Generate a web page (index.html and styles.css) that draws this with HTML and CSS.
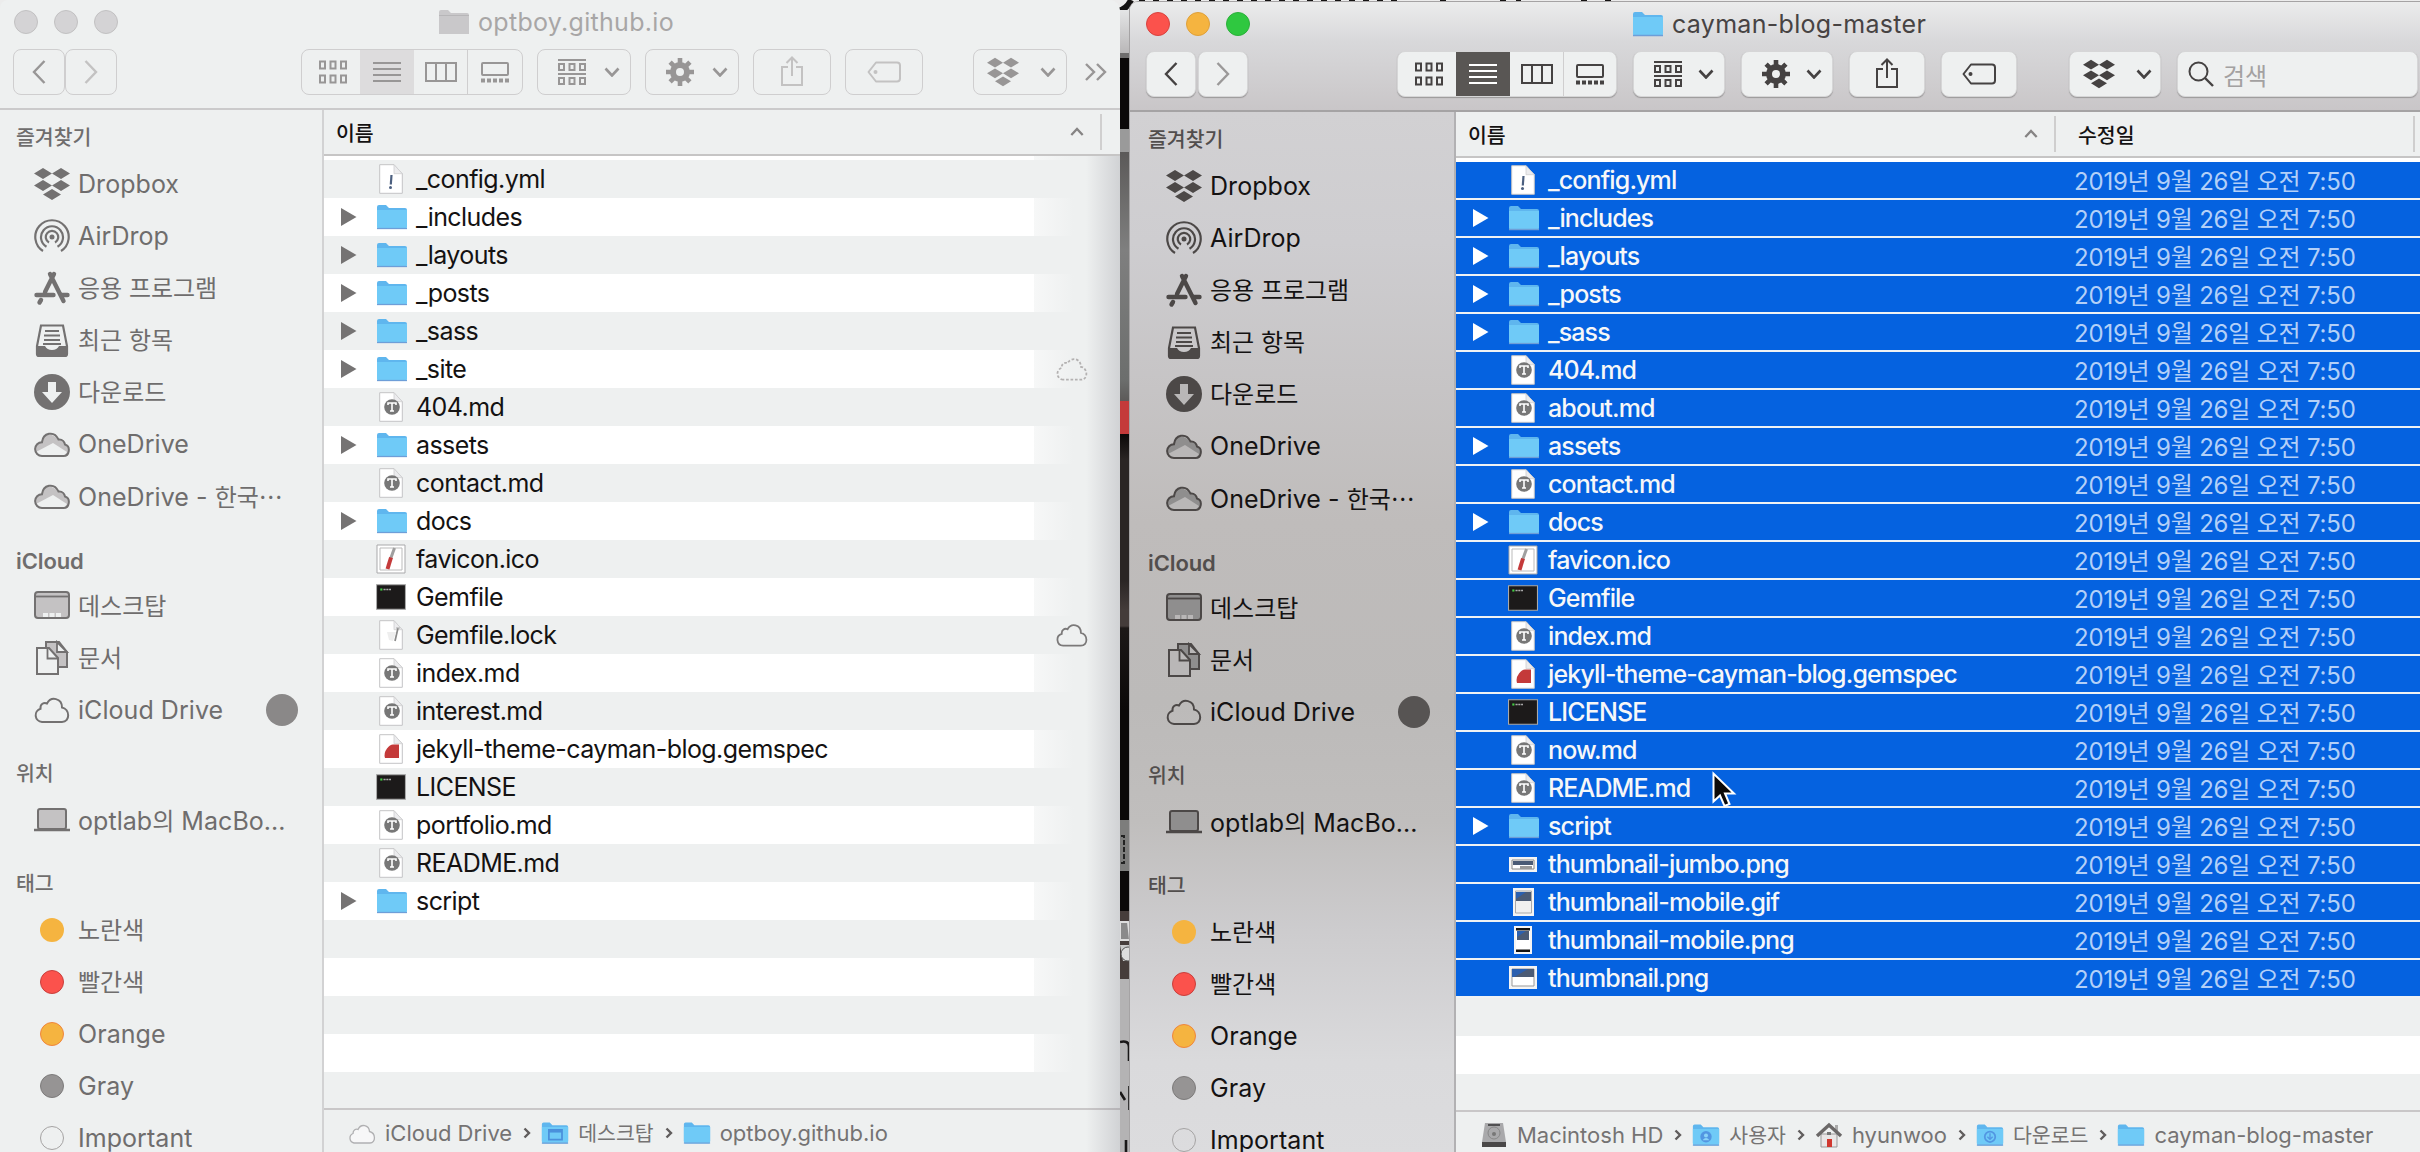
FILE: index.html
```html
<!DOCTYPE html>
<html lang="ko">
<head>
<meta charset="utf-8">
<title>Finder</title>
<link rel="stylesheet" href="styles.css">
</head>
<body>
<svg class="sprite" aria-hidden="true">
  <symbol id="dropbox" viewBox="0 0 36 36"><path fill="currentColor" d="M9 2l9 5.500-9 5.500-9-5.500zM27 2l9 5.500-9 5.500-9-5.500zM9 14l9 5.500-9 5.500-9-5.500zM27 14l9 5.500-9 5.500-9-5.500zM18 23l9 5.500-9 5.500-9-5.500z"/></symbol>
  <symbol id="airdrop" viewBox="0 0 36 36"><circle cx="18" cy="19" r="2.500" fill="currentColor"/><g fill="none" stroke="currentColor" stroke-width="2.200"><path d="M15 24.500a6.200 6.200 0 1 1 6 0M12.500 28.800a11 11 0 1 1 11 0M9 33a16.700 16.700 0 1 1 18 0"/></g></symbol>
  <symbol id="apps" viewBox="0 0 36 36"><g fill="none" stroke="currentColor" stroke-width="4.400" stroke-linecap="round"><path d="M16 4l13.500 27M20 4l-9 18M2.500 25h17M28 25h5.500M7 30l-1.500 2.500"/></g></symbol>
  <symbol id="recents" viewBox="0 0 36 36"><path d="M7 3.500h22l4 20.500v8q0 2-2 2H5q-2 0-2-2v-8z" fill="none" stroke="currentColor" stroke-width="2.200"/><path d="M3 24h8q2 4 7 4t7-4h8v10H3z" fill="currentColor"/><path d="M11 9h14M10 13.500h16M10 18h16M9 22h18" stroke="currentColor" stroke-width="1.800"/></symbol>
  <symbol id="downloads" viewBox="0 0 36 36"><circle cx="18" cy="18" r="18" fill="currentColor"/><path class="cut" d="M14 8h8v10h6L18 29 8 18h6z"/></symbol>
  <symbol id="onedrive" viewBox="0 0 36 36"><path class="mid" d="M8 30a6.600 6.600 0 0 1-1-13.300C8 10 17 4 24 14c5-.5 7 3 7 5.500 5 2 5 10.500-1 10.500z"/><path class="lite" d="M2 26l17-9 14 9-3 4H7z"/><path d="M8 30a6.900 6.900 0 0 1 0-13.800C9 7 20 4 24.500 13.500c4-.5 6 2.500 6.500 5 6 2 4.500 11.500-1.500 11.500z" fill="none" stroke="currentColor" stroke-width="2"/></symbol>
  <symbol id="desktop" viewBox="0 0 36 36"><rect class="mid" x="1" y="4" width="34" height="26" rx="3" stroke="currentColor" stroke-width="2"/><path d="M2 8.500h32" stroke="currentColor" stroke-width="1.800"/><path class="lite" d="M9 25h5v4H9zM15.500 25h5v4h-5zM22 25h5v4h-5z"/></symbol>
  <symbol id="documents" viewBox="0 0 36 36"><path class="mid" d="M12 2h13l8 10v15H12z" stroke="currentColor" stroke-width="2"/><path class="lite" d="M23 2v10h10z" stroke="currentColor" stroke-width="1.800"/><path class="lite" d="M3 8h12l9 10v16H3z" stroke="currentColor" stroke-width="2"/><path d="M13.500 8v10.500H23" fill="none" stroke="currentColor" stroke-width="1.800"/></symbol>
  <symbol id="cloud" viewBox="0 0 36 36"><path d="M8 30a6.800 6.800 0 0 1-1.500-13.300C6 12 10 10 13 11.500 17 4 28 6 28 15.500c8 1.500 8.500 14.500 0 14.500z" fill="none" stroke="currentColor" stroke-width="2"/></symbol>
  <symbol id="laptop" viewBox="0 0 36 36"><rect class="mid" x="4" y="7" width="28" height="20" rx="2" stroke="currentColor" stroke-width="2"/><path d="M0 28h36" stroke="currentColor" stroke-width="2.400"/></symbol>
  <symbol id="folder" viewBox="0 0 32 26"><path fill="#5fb6ee" d="M1 3q0-2 2-2h7l3 3h16q2 0 2 2v16H1z"/><path fill="#6fcaf7" d="M1 6h30v17q0 2-1.500 2h-27Q1 25 1 23z"/><path d="M1 24.500h30" stroke="#6e9ed8" stroke-width="1.300"/></symbol>
  <symbol id="folder-gray" viewBox="0 0 32 26"><path fill="#c9c8ca" d="M1 3q0-2 2-2h7l3 3h16q2 0 2 2v19H1z"/><path d="M1 6.500h30" stroke="#b7b6b8"/></symbol>
  <symbol id="folder-desk" viewBox="0 0 32 26"><use href="#folder"/><path d="M9 9.500h15v11H9z" fill="none" stroke="#4a90dc" stroke-width="2"/><path d="M9 11h15" stroke="#4a90dc" stroke-width="3"/></symbol>
  <symbol id="folder-user" viewBox="0 0 32 26"><use href="#folder"/><circle cx="16" cy="15" r="6.500" fill="#5296e2"/><circle cx="16" cy="13.500" r="2.300" fill="#8ad3f8"/><path d="M12 19q4-5 8 0" fill="#8ad3f8"/></symbol>
  <symbol id="folder-down" viewBox="0 0 32 26"><use href="#folder"/><circle cx="16" cy="15" r="6" fill="none" stroke="#5296e2" stroke-width="2"/><path d="M16 11v7m-3-3l3 3 3-3" fill="none" stroke="#5296e2" stroke-width="1.500"/></symbol>
  <symbol id="page" viewBox="0 0 24 30"><path d="M.7.7H15l8.300 9V29.300H.7z" fill="#fff" stroke="#c4c4c6" stroke-width="1"/><path d="M15 .7v9h8.300z" fill="#ececee" stroke="#cfcfd1" stroke-width=".8"/></symbol>
  <symbol id="yml" viewBox="0 0 24 30"><use href="#page"/><path d="M12.500 11l-.7 9.500" stroke="#4c6080" stroke-width="2.200"/><circle cx="11.500" cy="23.500" r="1.500" fill="#4c6080"/></symbol>
  <symbol id="md" viewBox="0 0 24 30"><use href="#page"/><circle cx="13" cy="15" r="7.800" fill="#777"/><path d="M9 13v-2h8v2M13 11v8M11 19h4" fill="none" stroke="#fff" stroke-width="1.600"/></symbol>
  <symbol id="lock" viewBox="0 0 24 30"><use href="#page"/><path d="M19 8l-3 13" stroke="#8a8a8a" stroke-width="1.700"/><path d="M17 8h4" stroke="#aaa"/><path d="M8 12l2 8 4 1 3-9" fill="#eee"/></symbol>
  <symbol id="gem" viewBox="0 0 24 30"><use href="#page"/><path fill="#c43a3a" d="M14 10.500h6v13.500H6q-1.500-5 2-9.500 3-4 6-4z"/></symbol>
  <symbol id="ico" viewBox="0 0 30 30"><path d="M1 1h28v28H1z" fill="#fff" stroke="#a9a9ab"/><path d="M4 4h22v22H4z" fill="#fff" stroke="#bbb"/><path d="M18.500 4l-4 11" stroke="#a0a0a0" stroke-width="3"/><path d="M15 13.500L11.500 25" stroke="#c43a3a" stroke-width="4"/></symbol>
  <symbol id="exec" viewBox="0 0 28 28"><path d="M.5 2.500h27v23H.5z" fill="#1c1a1a" stroke="#aaa"/><path d="M4 7h2" stroke="#4c4" stroke-width="2"/><path d="M7 7h7" stroke="#aaa" stroke-width="1.600" stroke-dasharray="2 .6"/></symbol>
  <symbol id="jumbo" viewBox="0 0 30 30"><path d="M1 8h28v15H1z" fill="#f4f4f4"/><path d="M4 11h22v9H4z" fill="#fff" stroke="#888"/><path d="M5 12h20v4H5z" fill="#4b5b75"/><path d="M12 17h12v3H12z" fill="#999"/></symbol>
  <symbol id="mobile-gif" viewBox="0 0 30 30"><path d="M5 1h21v28H5z" fill="#f4f4f4"/><path d="M7.500 4h16v22h-16z" fill="#f0f0f0" stroke="#aaa"/><path d="M8 5h15v9H8z" fill="#4b5b75"/><path d="M8 5h10l-10 7z" fill="#2b60b0"/></symbol>
  <symbol id="mobile-png" viewBox="0 0 30 30"><path d="M6 1h18v28H6z" fill="#f4f4f4"/><path d="M8 3h14v24H8z" fill="#fff"/><path d="M8 3h14v2.500H8zM8 24.500h14V27H8z" fill="#111"/><path d="M9 6h12v9H9z" fill="#4b5b75"/><path d="M9 6h9l-9 6z" fill="#2b60b0"/></symbol>
  <symbol id="thumb" viewBox="0 0 30 30"><path d="M1 3h28v23H1z" fill="#f4f4f4"/><path d="M4 6h22v17H4z" fill="#fff" stroke="#999"/><path d="M4 6h22v8H4z" fill="#4b5b75"/><path d="M4 6h16L6 14H4z" fill="#2b60b0"/></symbol>
  <symbol id="disk" viewBox="0 0 26 26"><path d="M4 1h18l3 19v5H1v-5z" fill="#a9a9ab"/><path d="M1 20h24v5H1z" fill="#4a4848"/><circle cx="13" cy="11" r="6" fill="none" stroke="#888"/><circle cx="13" cy="12" r="2" fill="#777"/><path d="M7 3h12" stroke="#333" stroke-width="1.500"/></symbol>
  <symbol id="house" viewBox="0 0 26 26"><path d="M5 12h16v13H5z" fill="#e9e6e6" stroke="#999"/><path d="M19 3h3v7h-3z" fill="#aaa"/><path d="M1 14L13 3l12 11" fill="none" stroke="#6b6868" stroke-width="3.400"/><path d="M11 17h5v8h-5z" fill="#d0382f"/><path d="M11 10h4v3h-4z" fill="#777"/></symbol>
  <symbol id="softcloud" viewBox="0 0 26 26"><path d="M5 23a5 5 0 0 1-1-9.500C4 10 7 8.500 9 9.500 12 3 20 5 20.500 11.500 27 13 27 23 21 23z" fill="#f7f7f8" stroke="#b0b0b2" stroke-width="1.300"/></symbol>
  <symbol id="v-icons" viewBox="0 0 28 24"><path d="M1 1.500h5v7H1zM11.500 1.500h5v7h-5zM22 1.500h5v7h-5zM1 15.500h5v7H1zM11.500 15.500h5v7h-5zM22 15.500h5v7h-5z" fill="none" stroke="currentColor" stroke-width="2"/></symbol>
  <symbol id="v-list" viewBox="0 0 28 24"><path d="M0 3h28M0 9h28M0 15h28M0 21h28" stroke="currentColor" stroke-width="2"/></symbol>
  <symbol id="v-cols" viewBox="0 0 32 24"><path d="M1 3h30v18H1zM11 3v18M21 3v18" fill="none" stroke="currentColor" stroke-width="2"/></symbol>
  <symbol id="v-gallery" viewBox="0 0 28 24"><rect x="1" y="3" width="26" height="12" rx="1" fill="none" stroke="currentColor" stroke-width="2"/><path d="M0 20.500h28" stroke="currentColor" stroke-width="4" stroke-dasharray="4 2"/></symbol>
  <symbol id="group" viewBox="0 0 28 28"><path d="M0 2h28M0 16h28" stroke="currentColor" stroke-width="2"/><path d="M1 6h5v6H1zM11.500 6h5v6h-5zM22 6h5v6h-5zM1 20h5v6H1zM11.500 20h5v6h-5zM22 20h5v6h-5z" fill="none" stroke="currentColor" stroke-width="2"/></symbol>
  <symbol id="gear" viewBox="0 0 28 28"><circle cx="14" cy="14" r="7" fill="none" stroke="currentColor" stroke-width="6"/><path d="M14 0v6M14 22v6M0 14h6M22 14h6M4.100 4.100l4.300 4.300M19.600 19.600l4.300 4.300M4.100 23.900l4.300-4.300M19.600 8.400l4.300-4.300" stroke="currentColor" stroke-width="4.600"/></symbol>
  <symbol id="share" viewBox="0 0 24 32"><path d="M8 12H2v18h20V12h-6M12 21V3M6.500 8L12 2.500 17.500 8" fill="none" stroke="currentColor" stroke-width="2"/></symbol>
  <symbol id="tag" viewBox="0 0 34 22"><path d="M9 1.500h21q3 0 3 3v13q0 3-3 3H9L1.500 11z" fill="none" stroke="currentColor" stroke-width="2" stroke-linejoin="round"/><circle cx="8.500" cy="11" r="2" fill="currentColor"/></symbol>
  <symbol id="down" viewBox="0 0 16 10"><path d="M1.500 1.500L8 8.500l6.500-7" fill="none" stroke="currentColor" stroke-width="2.600"/></symbol>
  <symbol id="back" viewBox="0 0 14 24"><path d="M12.500 1L2 12l10.500 11" fill="none" stroke="currentColor" stroke-width="2.400"/></symbol>
  <symbol id="fwd" viewBox="0 0 14 24"><path d="M1.500 1L12 12 1.500 23" fill="none" stroke="currentColor" stroke-width="2.400"/></symbol>
  <symbol id="more" viewBox="0 0 22 18"><path d="M1 1l8 8-8 8M12 1l8 8-8 8" fill="none" stroke="currentColor" stroke-width="2.400"/></symbol>
  <symbol id="loupe" viewBox="0 0 26 26"><circle cx="10.500" cy="10.500" r="9" fill="none" stroke="currentColor" stroke-width="2"/><path d="M17 17l8 8" stroke="currentColor" stroke-width="2.400"/></symbol>
  <symbol id="chev" viewBox="0 0 8 12"><path d="M1.500 1.500L6 6l-4.500 4.500" fill="none" stroke="currentColor" stroke-width="2.400"/></symbol>
  <symbol id="tri" viewBox="0 0 16 18"><path d="M0 0l15.500 9L0 18z" fill="currentColor"/></symbol>
</svg>

<div class="desktop">
  <div class="backdrop">
    <svg class="headline" viewBox="0 0 500 12">
      <path d="M3 11Q12 9 16 0" fill="none" stroke="#141212" stroke-width="6"/>
      <path d="M24 1h260" stroke="#141212" stroke-width="2.500" stroke-dasharray="6 8"/>
      <path d="M325 1h6M385 1h6M401 1h5M466 1h6M490 1h6" stroke="#141212" stroke-width="2.500"/>
    </svg>
    <svg class="sliver" viewBox="0 0 12 1142">
      <path d="M1 826h3v27H1" fill="none" stroke="#222" stroke-width="2" stroke-dasharray="5 2"/>
      <path d="M0 912h8l2 18H0z" fill="#8a8a8a" stroke="#ddd" stroke-width="2"/>
      <path d="M0 935h12v16H3z" fill="#c9c9c9"/><circle cx="8" cy="944" r="7" fill="#ddd" stroke="#555"/>
      <path d="M0 1032q9-2 9 5v14M0 1082l5 8M9.500 1076v24M6 1130v12" fill="none" stroke="#1a1818" stroke-width="2.600"/>
    </svg>
  </div>

  <section class="window inactive">
    <header class="toolbar">
      <div class="titlebar">
        <i class="light"></i><i class="light"></i><i class="light"></i>
        <h1 class="title"><svg><use href="#folder-gray"/></svg>optboy.github.io</h1>
      </div>
      <div class="tools">
        <span class="btn nav"><svg class="i-nav"><use href="#back"/></svg></span><span class="btn nav off"><svg class="i-nav"><use href="#fwd"/></svg></span>
        <div class="btn seg"><span><svg class="i28"><use href="#v-icons"/></svg></span><span class="on"><svg class="i28"><use href="#v-list"/></svg></span><span><svg class="i32"><use href="#v-cols"/></svg></span><span><svg class="i28"><use href="#v-gallery"/></svg></span></div>
        <span class="btn drop"><svg class="i-group"><use href="#group"/></svg><svg class="i-down"><use href="#down"/></svg></span>
        <span class="btn drop"><svg class="i-group"><use href="#gear"/></svg><svg class="i-down"><use href="#down"/></svg></span>
        <span class="btn single off"><svg class="i-share"><use href="#share"/></svg></span>
        <span class="btn single off"><svg class="i-tag"><use href="#tag"/></svg></span>
        <span class="btn drop box"><svg class="i-box"><use href="#dropbox"/></svg><svg class="i-down"><use href="#down"/></svg></span>
        <svg class="i-more"><use href="#more"/></svg>
      </div>
    </header>
    <div class="body">
      <nav class="sidebar">
        <h2 class="ko">즐겨찾기</h2>
        <a><svg><use href="#dropbox"/></svg>Dropbox</a>
        <a><svg><use href="#airdrop"/></svg>AirDrop</a>
        <a><svg><use href="#apps"/></svg><span class="ko">응용 프로그램</span></a>
        <a><svg><use href="#recents"/></svg><span class="ko">최근 항목</span></a>
        <a><svg><use href="#downloads"/></svg><span class="ko">다운로드</span></a>
        <a><svg><use href="#onedrive"/></svg>OneDrive</a>
        <a><svg><use href="#onedrive"/></svg><span>OneDrive - <span class="ko">한국⋯</span></span></a>
        <h2>iCloud</h2>
        <a><svg><use href="#desktop"/></svg><span class="ko">데스크탑</span></a>
        <a><svg><use href="#documents"/></svg><span class="ko">문서</span></a>
        <a><svg><use href="#cloud"/></svg>iCloud Drive<i class="progress"></i></a>
        <h2 class="ko">위치</h2>
        <a><svg><use href="#laptop"/></svg><span>optlab<span class="ko">의</span> MacBo...</span></a>
        <h2 class="ko">태그</h2>
        <a><i class="dot yellow"></i><span class="ko">노란색</span></a>
        <a><i class="dot red"></i><span class="ko">빨간색</span></a>
        <a><i class="dot orange"></i>Orange</a>
        <a><i class="dot gray"></i>Gray</a>
        <a><i class="dot none"></i>Important</a>
      </nav>
      <main class="content">
        <div class="head"><span class="col-name ko">이름</span><svg class="sort"><use href="#down"/></svg></div>
        <div class="list">
          <div class="row"><b></b><svg class="doc"><use href="#yml"/></svg><span>_config.yml</span></div>
          <div class="row"><svg class="tri"><use href="#tri"/></svg><svg class="fold"><use href="#folder"/></svg><span>_includes</span></div>
          <div class="row"><svg class="tri"><use href="#tri"/></svg><svg class="fold"><use href="#folder"/></svg><span>_layouts</span></div>
          <div class="row"><svg class="tri"><use href="#tri"/></svg><svg class="fold"><use href="#folder"/></svg><span>_posts</span></div>
          <div class="row"><svg class="tri"><use href="#tri"/></svg><svg class="fold"><use href="#folder"/></svg><span>_sass</span></div>
          <div class="row"><svg class="tri"><use href="#tri"/></svg><svg class="fold"><use href="#folder"/></svg><span>_site</span><svg class="status dashed"><use href="#cloud"/></svg></div>
          <div class="row"><b></b><svg class="doc"><use href="#md"/></svg><span>404.md</span></div>
          <div class="row"><svg class="tri"><use href="#tri"/></svg><svg class="fold"><use href="#folder"/></svg><span>assets</span></div>
          <div class="row"><b></b><svg class="doc"><use href="#md"/></svg><span>contact.md</span></div>
          <div class="row"><svg class="tri"><use href="#tri"/></svg><svg class="fold"><use href="#folder"/></svg><span>docs</span></div>
          <div class="row"><b></b><svg class="doc"><use href="#ico"/></svg><span>favicon.ico</span></div>
          <div class="row"><b></b><svg class="doc"><use href="#exec"/></svg><span>Gemfile</span></div>
          <div class="row"><b></b><svg class="doc"><use href="#lock"/></svg><span>Gemfile.lock</span><svg class="status"><use href="#cloud"/></svg></div>
          <div class="row"><b></b><svg class="doc"><use href="#md"/></svg><span>index.md</span></div>
          <div class="row"><b></b><svg class="doc"><use href="#md"/></svg><span>interest.md</span></div>
          <div class="row"><b></b><svg class="doc"><use href="#gem"/></svg><span>jekyll-theme-cayman-blog.gemspec</span></div>
          <div class="row"><b></b><svg class="doc"><use href="#exec"/></svg><span>LICENSE</span></div>
          <div class="row"><b></b><svg class="doc"><use href="#md"/></svg><span>portfolio.md</span></div>
          <div class="row"><b></b><svg class="doc"><use href="#md"/></svg><span>README.md</span></div>
          <div class="row"><svg class="tri"><use href="#tri"/></svg><svg class="fold"><use href="#folder"/></svg><span>script</span></div>
        </div>
        <footer class="path">
          <svg><use href="#softcloud"/></svg><span>iCloud Drive</span><svg class="chev"><use href="#chev"/></svg>
          <svg><use href="#folder-desk"/></svg><span class="ko">데스크탑</span><svg class="chev"><use href="#chev"/></svg>
          <svg><use href="#folder"/></svg><span>optboy.github.io</span>
        </footer>
      </main>
    </div>
    <div class="edge-shade"></div>
  </section>

  <section class="window active">
    <header class="toolbar">
      <div class="titlebar">
        <i class="light close"></i><i class="light mini"></i><i class="light zoom"></i>
        <h1 class="title"><svg><use href="#folder"/></svg>cayman-blog-master</h1>
      </div>
      <div class="tools">
        <span class="btn nav"><svg class="i-nav"><use href="#back"/></svg></span><span class="btn nav off"><svg class="i-nav"><use href="#fwd"/></svg></span>
        <div class="btn seg"><span><svg class="i28"><use href="#v-icons"/></svg></span><span class="on"><svg class="i28"><use href="#v-list"/></svg></span><span><svg class="i32"><use href="#v-cols"/></svg></span><span><svg class="i28"><use href="#v-gallery"/></svg></span></div>
        <span class="btn drop"><svg class="i-group"><use href="#group"/></svg><svg class="i-down"><use href="#down"/></svg></span>
        <span class="btn drop"><svg class="i-group"><use href="#gear"/></svg><svg class="i-down"><use href="#down"/></svg></span>
        <span class="btn single"><svg class="i-share"><use href="#share"/></svg></span>
        <span class="btn single"><svg class="i-tag"><use href="#tag"/></svg></span>
        <span class="btn drop box"><svg class="i-box"><use href="#dropbox"/></svg><svg class="i-down"><use href="#down"/></svg></span>
        <span class="btn search"><svg class="i-loupe"><use href="#loupe"/></svg><span class="ko">검색</span></span>
      </div>
    </header>
    <div class="body">
      <nav class="sidebar">
        <h2 class="ko">즐겨찾기</h2>
        <a><svg><use href="#dropbox"/></svg>Dropbox</a>
        <a><svg><use href="#airdrop"/></svg>AirDrop</a>
        <a><svg><use href="#apps"/></svg><span class="ko">응용 프로그램</span></a>
        <a><svg><use href="#recents"/></svg><span class="ko">최근 항목</span></a>
        <a><svg><use href="#downloads"/></svg><span class="ko">다운로드</span></a>
        <a><svg><use href="#onedrive"/></svg>OneDrive</a>
        <a><svg><use href="#onedrive"/></svg><span>OneDrive - <span class="ko">한국⋯</span></span></a>
        <h2>iCloud</h2>
        <a><svg><use href="#desktop"/></svg><span class="ko">데스크탑</span></a>
        <a><svg><use href="#documents"/></svg><span class="ko">문서</span></a>
        <a><svg><use href="#cloud"/></svg>iCloud Drive<i class="progress"></i></a>
        <h2 class="ko">위치</h2>
        <a><svg><use href="#laptop"/></svg><span>optlab<span class="ko">의</span> MacBo...</span></a>
        <h2 class="ko">태그</h2>
        <a><i class="dot yellow"></i><span class="ko">노란색</span></a>
        <a><i class="dot red"></i><span class="ko">빨간색</span></a>
        <a><i class="dot orange"></i>Orange</a>
        <a><i class="dot gray"></i>Gray</a>
        <a><i class="dot none"></i>Important</a>
      </nav>
      <main class="content">
        <div class="head"><span class="col-name ko">이름</span><svg class="sort"><use href="#down"/></svg><span class="col-date ko">수정일</span></div>
        <div class="list">
          <div class="row"><b></b><svg class="doc"><use href="#yml"/></svg><span>_config.yml</span><time>2019년 9월 26일 오전 7:50</time></div>
          <div class="row"><svg class="tri"><use href="#tri"/></svg><svg class="fold"><use href="#folder"/></svg><span>_includes</span><time>2019년 9월 26일 오전 7:50</time></div>
          <div class="row"><svg class="tri"><use href="#tri"/></svg><svg class="fold"><use href="#folder"/></svg><span>_layouts</span><time>2019년 9월 26일 오전 7:50</time></div>
          <div class="row"><svg class="tri"><use href="#tri"/></svg><svg class="fold"><use href="#folder"/></svg><span>_posts</span><time>2019년 9월 26일 오전 7:50</time></div>
          <div class="row"><svg class="tri"><use href="#tri"/></svg><svg class="fold"><use href="#folder"/></svg><span>_sass</span><time>2019년 9월 26일 오전 7:50</time></div>
          <div class="row"><b></b><svg class="doc"><use href="#md"/></svg><span>404.md</span><time>2019년 9월 26일 오전 7:50</time></div>
          <div class="row"><b></b><svg class="doc"><use href="#md"/></svg><span>about.md</span><time>2019년 9월 26일 오전 7:50</time></div>
          <div class="row"><svg class="tri"><use href="#tri"/></svg><svg class="fold"><use href="#folder"/></svg><span>assets</span><time>2019년 9월 26일 오전 7:50</time></div>
          <div class="row"><b></b><svg class="doc"><use href="#md"/></svg><span>contact.md</span><time>2019년 9월 26일 오전 7:50</time></div>
          <div class="row"><svg class="tri"><use href="#tri"/></svg><svg class="fold"><use href="#folder"/></svg><span>docs</span><time>2019년 9월 26일 오전 7:50</time></div>
          <div class="row"><b></b><svg class="doc"><use href="#ico"/></svg><span>favicon.ico</span><time>2019년 9월 26일 오전 7:50</time></div>
          <div class="row"><b></b><svg class="doc"><use href="#exec"/></svg><span>Gemfile</span><time>2019년 9월 26일 오전 7:50</time></div>
          <div class="row"><b></b><svg class="doc"><use href="#md"/></svg><span>index.md</span><time>2019년 9월 26일 오전 7:50</time></div>
          <div class="row"><b></b><svg class="doc"><use href="#gem"/></svg><span>jekyll-theme-cayman-blog.gemspec</span><time>2019년 9월 26일 오전 7:50</time></div>
          <div class="row"><b></b><svg class="doc"><use href="#exec"/></svg><span>LICENSE</span><time>2019년 9월 26일 오전 7:50</time></div>
          <div class="row"><b></b><svg class="doc"><use href="#md"/></svg><span>now.md</span><time>2019년 9월 26일 오전 7:50</time></div>
          <div class="row"><b></b><svg class="doc"><use href="#md"/></svg><span>README.md</span><time>2019년 9월 26일 오전 7:50</time></div>
          <div class="row"><svg class="tri"><use href="#tri"/></svg><svg class="fold"><use href="#folder"/></svg><span>script</span><time>2019년 9월 26일 오전 7:50</time></div>
          <div class="row"><b></b><svg class="doc"><use href="#jumbo"/></svg><span>thumbnail-jumbo.png</span><time>2019년 9월 26일 오전 7:50</time></div>
          <div class="row"><b></b><svg class="doc"><use href="#mobile-gif"/></svg><span>thumbnail-mobile.gif</span><time>2019년 9월 26일 오전 7:50</time></div>
          <div class="row"><b></b><svg class="doc"><use href="#mobile-png"/></svg><span>thumbnail-mobile.png</span><time>2019년 9월 26일 오전 7:50</time></div>
          <div class="row"><b></b><svg class="doc"><use href="#thumb"/></svg><span>thumbnail.png</span><time>2019년 9월 26일 오전 7:50</time></div>
        </div>
        <footer class="path">
          <svg><use href="#disk"/></svg><span>Macintosh HD</span><svg class="chev"><use href="#chev"/></svg>
          <svg><use href="#folder-user"/></svg><span class="ko">사용자</span><svg class="chev"><use href="#chev"/></svg>
          <svg><use href="#house"/></svg><span>hyunwoo</span><svg class="chev"><use href="#chev"/></svg>
          <svg><use href="#folder-down"/></svg><span class="ko">다운로드</span><svg class="chev"><use href="#chev"/></svg>
          <svg><use href="#folder"/></svg><span>cayman-blog-master</span>
        </footer>
      </main>
    </div>
  </section>

  <svg class="cursor" viewBox="0 0 24 36"><path d="M1.500 1.500v28l6.500-6 4.500 10.500 5-2-4.500-10.500h9z" fill="#0c0a0a" stroke="#fff" stroke-width="2"/></svg>
</div>
</body>
</html>
```
FILE: styles.css
```css
* { box-sizing: border-box; }
body {
  margin: 0;
  font-family: Inter, "Noto Sans CJK KR", sans-serif;
  font-size: 25px;
}
svg { display: block; flex: none; overflow: visible; }
.sprite { position: absolute; width: 0; height: 0; }
.ko { font-family: "Noto Sans CJK KR", sans-serif; letter-spacing: 0; }

.desktop { position: relative; width: 2420px; height: 1152px; overflow: hidden; background: #ececec; }
.backdrop { position: absolute; inset: 0; }
.sliver {
  position: absolute; left: 1120px; top: 10px; width: 12px; height: 1142px; overflow: hidden;
  background: linear-gradient(#e4e5e6 0, #b9b7b8 43px, #6f6d6d 43px 48px, #0b0808 48px 119px, #9a9a9a 119px 142px, #5b5958 142px, #7f7f7f 240px, #6c6e6d 370px, #5c5a59 391px, #c43a3a 391px 424px, #0b0808 424px, #2a2524 450px, #2a2524 570px, #443c3a 600px, #443c3a 616px, #1c1817 618px, #0b0808 700px 810px, #7d7d7c 810px 861px, #0b0808 861px 901px, #463d3b 901px 969px, #b4b3b4 969px);
}
.headline { position: absolute; left: 1115px; top: 0; width: 500px; height: 12px; }

.window { position: absolute; display: flex; flex-direction: column; overflow: hidden; }
.inactive {
  left: 0; top: 0; width: 1120px; height: 1156px;
  background: #eef0f0; border-radius: 8px 10px 0 0;
  --label: #6f6d6d; --heading: #6f6d6d; --glyph: #989696;
  --mid: #c4c2c3; --lite: #eef0f0;
}
.active {
  left: 1130px; top: 2px; width: 1300px; height: 1156px; padding-left: 2px;
  background: linear-gradient(#d2d1d3 110px, #cecdd0 240px, #bfbcbb 520px, #bcbab9 700px, #c0bebd 820px, #cdccce 930px, #dadadc 1060px, #dcdcde);
  border-radius: 8px 0 0 0; box-shadow: 0 0 0 1px #a5a3a4;
  --label: #141212; --heading: #524e4d; --glyph: #454242;
  --mid: #8f8e8e; --lite: #b9b7b7;
}

.toolbar { flex: none; height: 110px; border-bottom: 2px solid #cbcacb; }
.active .toolbar {
  margin-left: -2px; padding-left: 2px; border-color: #a5a3a4;
  background: linear-gradient(#ebecec, #d8d8da 40px, #c9c6c8);
}
.titlebar { display: flex; align-items: center; height: 44px; padding-left: 14px; gap: 16px; }
.light { width: 24px; height: 24px; border-radius: 50%; background: #d4d3d5; border: 1px solid #c2c1c2; }
.light.close { background: #fb524c; border-color: #d8423e; }
.light.mini { background: #f5b440; border-color: #dfa03a; }
.light.zoom { background: #2fc840; border-color: #2bb03a; }
.title {
  display: flex; align-items: center; gap: 8px; margin: 0 0 0 304px;
  font-size: 25px; font-weight: 400; letter-spacing: .3px; color: #a8a6a6;
}
.title svg { width: 32px; height: 26px; }
.active .title { margin-left: 366px; color: #474343; }

.tools { display: flex; align-items: center; height: 46px; margin-top: 5px; padding-left: 13px; color: var(--glyph); }
.active .tools { padding-left: 14px; }
.btn {
  flex: none; display: flex; align-items: center; height: 46px;
  border: 1px solid #cfcecf; border-radius: 8px;
}
.active .btn { background: #eef0f0; border-color: #d6d6d7; box-shadow: 0 1px 1px #9b999a; }
.nav { width: 52px; justify-content: center; }
.active .nav { width: 50px; margin-right: 2px; }
.off { color: #c3c2c2; }
.active .off { color: #9b9999; }
.i-nav { width: 14px; height: 28px; }
.seg { width: 222px; margin: 0 14px 0 184px; overflow: hidden; }
.active .seg { width: 220px; margin: 0 16px 0 147px; }
.seg span { display: flex; align-items: center; justify-content: center; width: 53px; height: 100%; }
.seg span:first-child { width: 58px; padding-left: 3px; }
.seg span:last-child { flex: 1; border-left: 1px solid #cfcecf; }
.seg .on { width: 54px; background: #dddcdd; }
.active .seg .on { background: #595654; color: #fff; }
.i28 { width: 28px; height: 24px; }
.i32 { width: 32px; height: 24px; }
.drop { width: 94px; margin-right: 14px; padding: 0 10px 0 20px; justify-content: space-between; }
.active .drop { width: 92px; margin-right: 16px; }
.active .box { padding-right: 8px; }
.i-group { width: 28px; height: 28px; }
.i-down { width: 16px; height: 10px; }
.single { width: 78px; margin-right: 14px; justify-content: center; }
.active .single { width: 76px; margin-right: 16px; }
.i-share { width: 24px; height: 32px; margin-top: -2px; }
.i-tag { width: 34px; height: 22px; }
.box { margin-left: 36px; padding-left: 13px; }
.i-box { width: 32px; height: 32px; }
.inactive .box { margin-right: 18px; }
.i-more { width: 22px; height: 18px; }
.search { width: 241px; padding-left: 10px; gap: 9px; }
.search .ko { font-size: 24px; color: #a3a1a1; }
.i-loupe { width: 26px; height: 26px; }

.body { flex: 1; display: flex; min-height: 0; }
.sidebar {
  flex: none; width: 324px; padding-top: 8px;
  border-right: 2px solid #d2d2d3; color: var(--label);
}
.active .sidebar { border-color: #b2b1b3; }
.sidebar h2 {
  height: 40px; margin: 18px 0 0 16px;
  font-size: 22px; line-height: 42px; font-weight: 600; letter-spacing: -.1px; color: var(--heading);
}
.sidebar h2:first-child { margin-top: 0; }
.sidebar h2.ko { font-size: 20.500px; line-height: 37px; font-weight: 500; letter-spacing: 0; }
.sidebar a { display: flex; align-items: center; height: 52px; padding-left: 34px; gap: 8px; letter-spacing: .05px; white-space: nowrap; }
.sidebar a svg { width: 36px; height: 36px; }
.inactive .sidebar a svg { color: #737171; }
.active .sidebar a svg { color: #4c4847; }
.sidebar .ko { font-size: 24px; line-height: 36px; }
.sidebar a > .ko { padding-bottom: 3px; }
.mid { fill: var(--mid); }
.lite, .cut { fill: var(--lite); }
.progress { width: 32px; height: 32px; margin-left: auto; margin-right: 24px; border-radius: 50%; background: #8a8888; }
.active .progress { background: #575453; }
.dot { width: 24px; height: 24px; margin: 0 6px; border-radius: 50%; border: 1.500px solid transparent; }
.yellow { background: #f5b440; }
.red { background: #fb524c; border-color: #c83f3c; }
.orange { background: #f5b440; border-color: #f0853d; }
.gray { background: #969494; border-color: #7d7b7b; }
.none { border-color: #a5a3a3; }

.content { flex: 1; display: flex; flex-direction: column; min-width: 0; background: #eef0f0; }
.head {
  position: relative; flex: none; display: flex; align-items: center; height: 46px;
  border-bottom: 2px solid #c6c5c5; color: #141212; font-size: 20.500px;
}
.head .ko { font-weight: 500; }
.col-name { margin-left: 12px; flex: 1; padding-bottom: 1px; }
.sort { width: 14px; height: 10px; transform: scaleY(-1); color: #868484; }
.inactive .sort { margin-right: 36px; }
.inactive .head::after { content: ""; position: absolute; left: 776px; top: 4px; width: 2px; height: 36px; background: #d0cfcf; }
.active .col-name { flex: none; width: 556px; }
.col-date { display: flex; align-items: center; height: 36px; width: 361px; margin-left: 16px; padding: 0 0 1px 22px; border: solid #cfcece; border-width: 0 2px; }
.list {
  flex: 1; padding-top: 4px;
  background: repeating-linear-gradient(#eef0f0 0 38px, #fff 38px 76px) 0 4px no-repeat #fff;
}
.inactive .list {
  background:
    linear-gradient(90deg, transparent 710px, rgba(238,240,240,.5) 710px, #eef0f0 750px),
    repeating-linear-gradient(#eef0f0 0 38px, #fff 38px 76px) 0 4px no-repeat #fff;
}
.row { display: flex; align-items: center; height: 38px; padding-left: 17px; color: #141212; letter-spacing: -.57px; white-space: nowrap; }
.row b, .tri { width: 16px; height: 18px; color: #757373; }
.tri { margin-right: 19px; }
.row b { margin-right: 18px; }
.fold { width: 32px; height: 26px; margin-right: 8px; }
.doc { width: 32px; height: 30px; margin-right: 9px; }
.status { width: 32px; height: 32px; margin-left: auto; margin-right: 32px; color: #7b7979; }
.dashed { stroke-dasharray: 3 2; color: #b3b1b1; }
.active .row { height: 38px; color: #f6f7f8; background: linear-gradient(#0562e0 36px, #f0f2f4 36px); padding-bottom: 2px; }
.active .tri { color: #fff; }
.active .row span { width: 526px; font-weight: 500; letter-spacing: -.87px; }
.row time { padding-bottom: 2px; font-size: 24px; color: #b3d0f8; letter-spacing: -.2px; }

.path {
  flex: none; display: flex; align-items: center; height: 48px; padding-left: 24px;
  border-top: 2px solid #c9c7c8; color: #757373; font-size: 22px;
}
.path svg { width: 28px; height: 26px; margin-right: 9px; }
.path .ko { font-size: 20.500px; padding-bottom: 2px; }
.path svg.chev { width: 8px; height: 12px; margin: 0 10px 0 11px; color: #605d5d; }

.edge-shade {
  position: absolute; left: 1086px; top: 156px; right: 0; bottom: 0;
  background: linear-gradient(90deg, rgba(115,115,125,0), rgba(115,115,125,.24));
}
.cursor { position: absolute; left: 1712px; top: 771px; width: 24px; height: 38px; }
```
